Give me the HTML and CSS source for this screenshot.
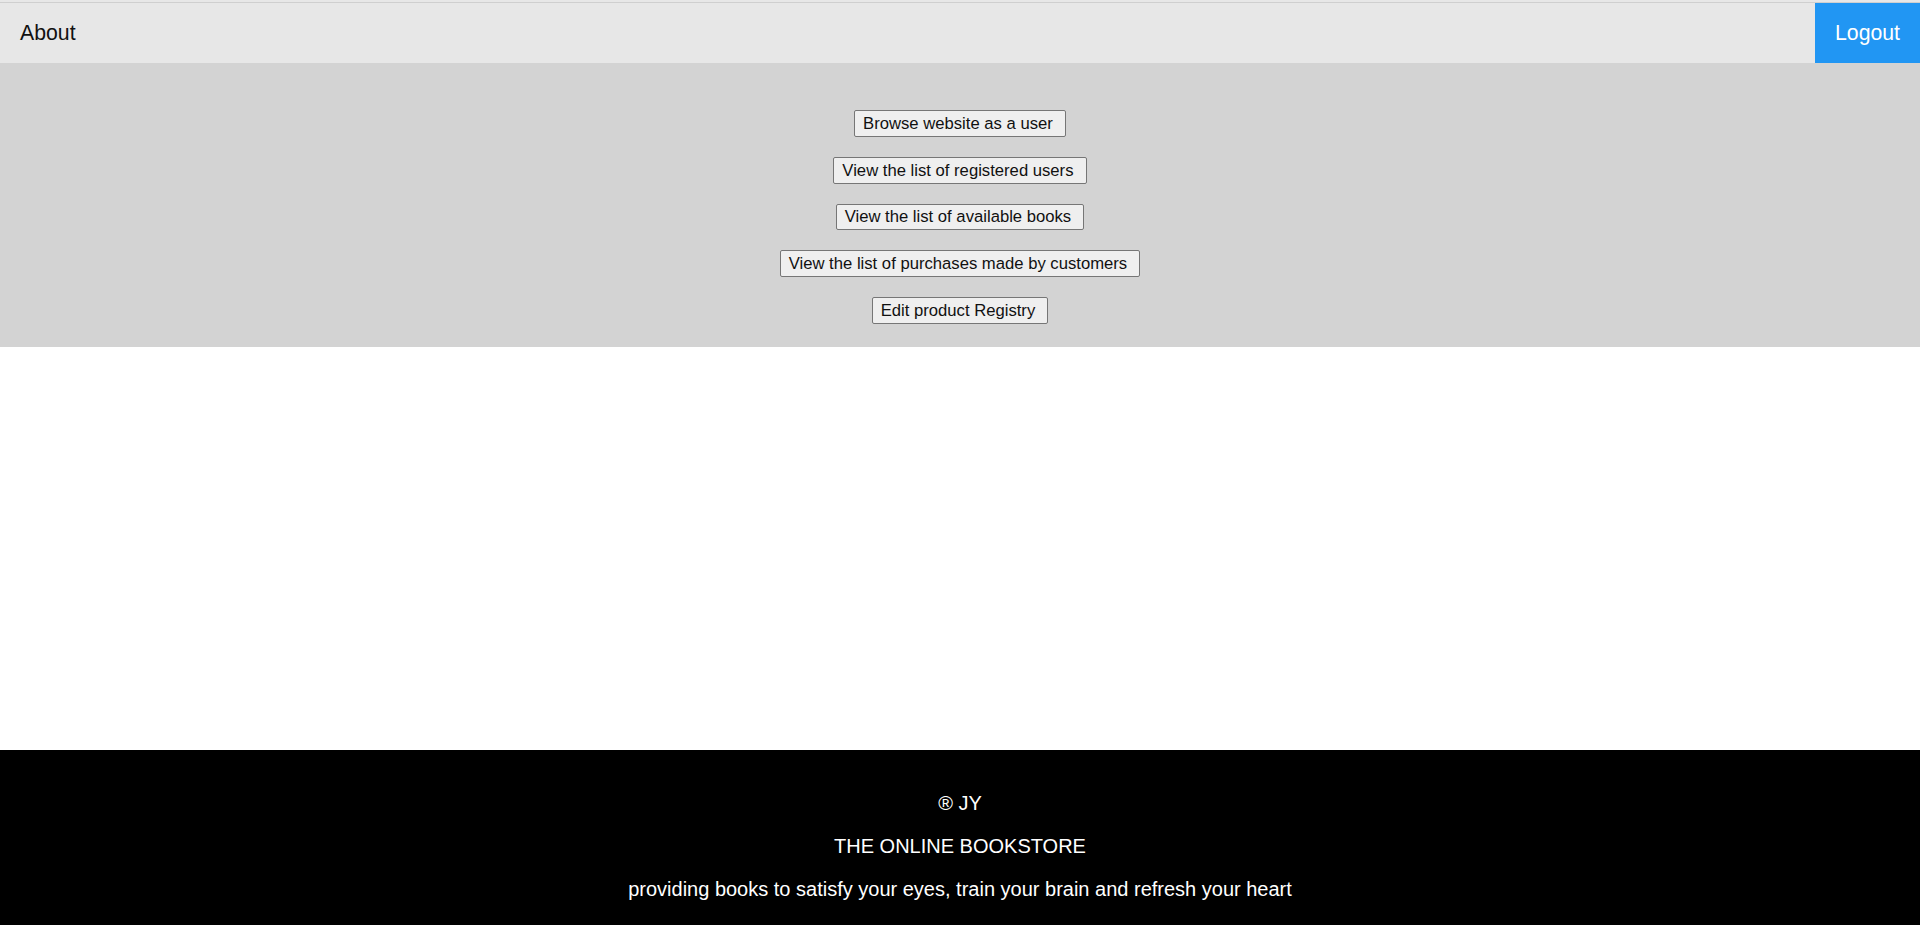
FILE: index.html
```html
<!DOCTYPE html>
<html lang="en">
<head>
<meta charset="utf-8">
<title>The Online Bookstore - Admin</title>
<link rel="stylesheet" href="styles.css">
</head>
<body>
  <nav class="topnav">
    <div class="topnav-inner">
      <a class="nav-link" href="#">About</a>
      <a class="nav-link logout" href="#">Logout</a>
    </div>
  </nav>
  <section class="admin-panel">
    <button class="admin-btn" type="button">Browse website as a user&nbsp;</button>
    <button class="admin-btn" type="button">View the list of registered users&nbsp;</button>
    <button class="admin-btn" type="button">View the list of available books&nbsp;</button>
    <button class="admin-btn" type="button">View the list of purchases made by customers&nbsp;</button>
    <button class="admin-btn" type="button">Edit product Registry&nbsp;</button>
  </section>
  <main class="content"></main>
  <footer class="footer">
    <p>® JY</p>
    <p>THE ONLINE BOOKSTORE</p>
    <p>providing books to satisfy your eyes, train your brain and refresh your heart</p>
  </footer>
</body>
</html>
```

FILE: styles.css
```css
html, body {
  margin: 0;
  padding: 0;
}

body {
  font-family: "Liberation Sans", Arial, sans-serif;
  background: #ffffff;
  color: #111;
}

.topnav {
  background: #e7e7e7;
  padding-top: 2px;
}

.topnav-inner {
  border-top: 1px solid #cfcfcf;
  height: 60px;
  display: flex;
  justify-content: space-between;
  align-items: stretch;
}

.nav-link {
  display: flex;
  align-items: center;
  padding: 0 20px;
  font-size: 21.25px;
  color: #111;
  text-decoration: none;
}

.logout {
  background: #2196f3;
  color: #ffffff;
}

.admin-panel {
  background: #d3d3d3;
  display: flex;
  flex-direction: column;
  align-items: center;
  gap: 20px;
  padding: 47px 0 22.75px;
}

.admin-btn {
  font-family: "Liberation Sans", Arial, sans-serif;
  font-size: 16.67px;
  line-height: 19px;
  color: #111;
  background: #efefef;
  border: 1px solid #767676;
  border-radius: 2px;
  padding: 2px 7.5px 2px 8px;
  height: 26.75px;
  white-space: pre;
}

.content {
  height: 403px;
}

.footer {
  background: #000000;
  color: #ffffff;
  text-align: center;
  padding: 22px 0;
}

.footer p {
  margin: 20px 0;
  font-size: 20px;
  line-height: 23px;
}
```
